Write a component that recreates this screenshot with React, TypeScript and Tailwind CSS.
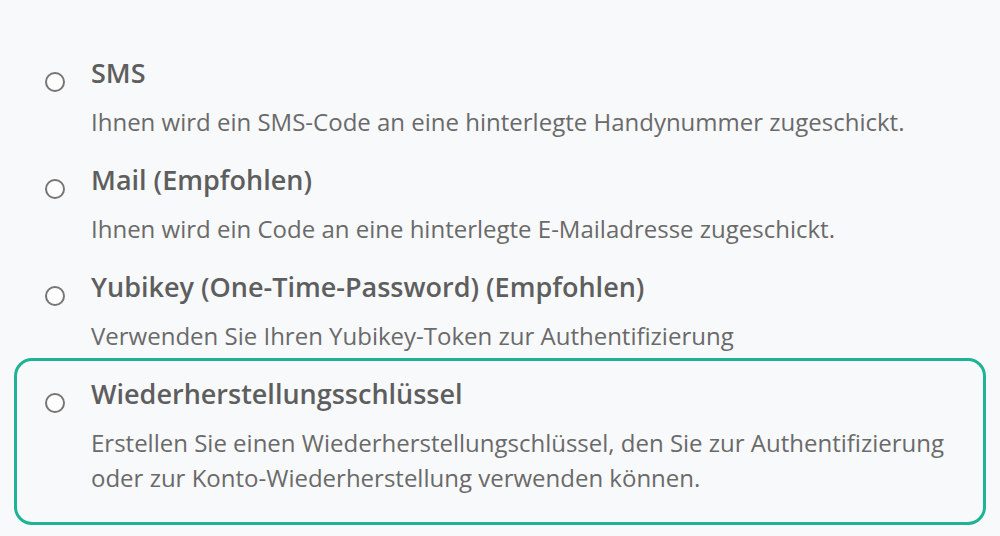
import { useState } from "react";

const METHODS = [
  {
    key: "sms",
    title: "SMS",
    text: "Ihnen wird ein SMS-Code an eine hinterlegte Handynummer zugeschickt.",
  },
  {
    key: "mail",
    title: "Mail (Empfohlen)",
    text: "Ihnen wird ein Code an eine hinterlegte E-Mailadresse zugeschickt.",
  },
  {
    key: "yubikey",
    title: "Yubikey (One-Time-Password) (Empfohlen)",
    text: "Verwenden Sie Ihren Yubikey-Token zur Authentifizierung",
  },
  {
    key: "recovery",
    title: "Wiederherstellungsschlüssel",
    text: "Erstellen Sie einen Wiederherstellungschlüssel, den Sie zur Authentifizierung oder zur Konto-Wiederherstellung verwenden können.",
  },
] as const;

export default function App() {
  const [selected] = useState<string>("");
  const highlighted = "recovery";

  return (
    <div
      className="min-h-[536px] w-full bg-[#f8f9fb] px-[14px] pt-[37px]"
      style={{ fontFamily: '"Open Sans", "Noto Sans", sans-serif' }}
    >
      <div className="flex flex-col gap-[2px]">
        {METHODS.map((m) => {
          const isHighlighted = m.key === highlighted;
          return (
            <label
              key={m.key}
              className={`flex cursor-pointer items-start gap-[26px] rounded-[18px] border-[3px] pl-[28px] pr-[30px] pt-[17px] ${
                isHighlighted ? "border-[#1eb394] pb-[27px]" : "border-transparent pb-0"
              }`}
            >
              <span
                className={`mt-[15px] h-[20px] w-[20px] shrink-0 rounded-full border-2 border-[#767676] bg-white ${
                  selected === m.key ? "bg-[#1eb394]" : ""
                }`}
              />
              <div className="flex flex-col">
                <span className="text-[27px] font-semibold leading-[32px] text-[#5e5e5e]">
                  {m.title}
                </span>
                <span className="mt-[15px] text-[24px] leading-[35px] text-[#6a6a6a]">
                  {m.text}
                </span>
              </div>
            </label>
          );
        })}
      </div>
    </div>
  );
}
